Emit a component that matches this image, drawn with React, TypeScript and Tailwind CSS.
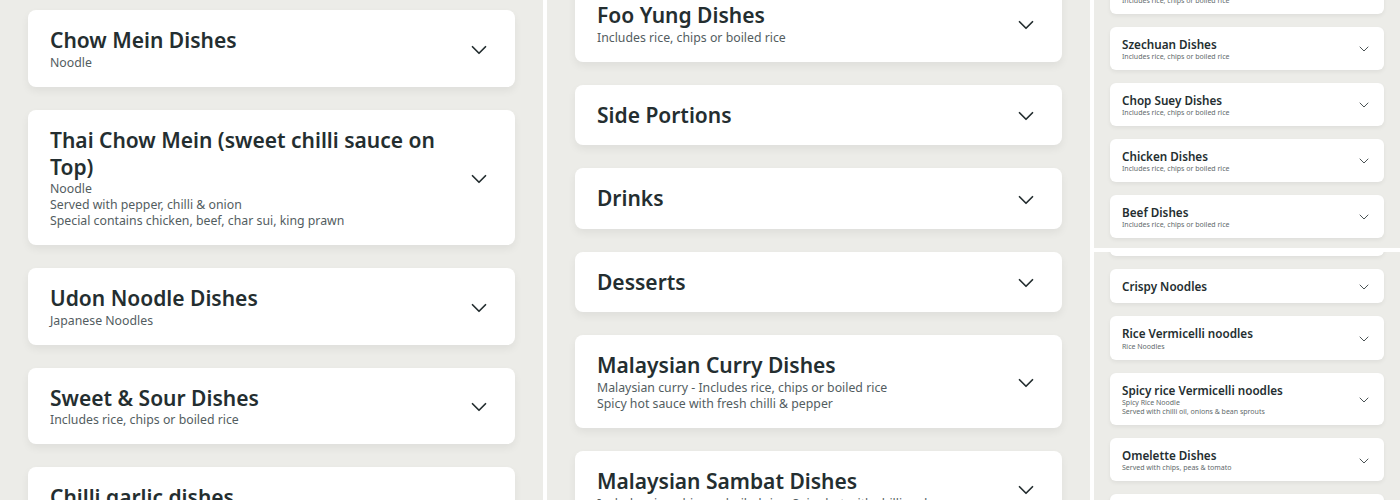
import { ChevronDown } from 'lucide-react'

interface Category {
  title: string
  lines?: string[]
}

const RICE = 'Includes rice, chips or boiled rice'

const leftCol: Category[] = [
  { title: 'Chow Mein Dishes', lines: ['Noodle'] },
  {
    title: 'Thai Chow Mein (sweet chilli sauce on Top)',
    lines: ['Noodle', 'Served with pepper, chilli & onion', 'Special contains chicken, beef, char sui, king prawn'],
  },
  { title: 'Udon Noodle Dishes', lines: ['Japanese Noodles'] },
  { title: 'Sweet & Sour Dishes', lines: [RICE] },
  { title: 'Chilli garlic dishes', lines: [RICE] },
]

const midCol: Category[] = [
  { title: 'Foo Yung Dishes', lines: [RICE] },
  { title: 'Side Portions' },
  { title: 'Drinks' },
  { title: 'Desserts' },
  {
    title: 'Malaysian Curry Dishes',
    lines: ['Malaysian curry - Includes rice, chips or boiled rice', 'Spicy hot sauce with fresh chilli & pepper'],
  },
  { title: 'Malaysian Sambat Dishes', lines: ['Includes rice, chips or boiled rice. Spicy hot with chilli and pepper'] },
]

const rightTop: Category[] = [
  { title: 'Curry Dishes', lines: [RICE] },
  { title: 'Szechuan Dishes', lines: [RICE] },
  { title: 'Chop Suey Dishes', lines: [RICE] },
  { title: 'Chicken Dishes', lines: [RICE] },
  { title: 'Beef Dishes', lines: [RICE] },
]

const rightBottom: Category[] = [
  { title: 'Fried Rice', lines: [RICE] },
  { title: 'Crispy Noodles' },
  { title: 'Rice Vermicelli noodles', lines: ['Rice Noodles'] },
  { title: 'Spicy rice Vermicelli noodles', lines: ['Spicy Rice Noodle', 'Served with chilli oil, onions & bean sprouts'] },
  { title: 'Omelette Dishes', lines: ['Served with chips, peas & tomato'] },
  { title: 'Prawn Dishes', lines: [RICE] },
]

function LargeCard({ title, lines }: Category) {
  return (
    <div className="flex items-center justify-between bg-white rounded-lg shadow-[0_4px_8px_rgba(0,0,0,0.06)] pl-[22px] pr-[23px] pt-[17px] pb-[16.5px]">
      <div className="w-[390px]">
        <h3 className="text-[21px] leading-[27px] font-semibold text-[#242e30]">{title}</h3>
        {lines && (
          <div className="mt-[0.75px] -mb-[0.75px]">
            {lines.map(l => (
              <p key={l} className="text-[12.3px] leading-[16px] text-[#535d5f]">{l}</p>
            ))}
          </div>
        )}
      </div>
      <ChevronDown size={26} strokeWidth={1.6} className="text-[#242e30] shrink-0 mt-[1px] -mb-[1px]" />
    </div>
  )
}

function SmallCard({ title, lines }: Category) {
  return (
    <div className="flex items-center justify-between bg-white rounded-md shadow-[0_2px_4px_rgba(0,0,0,0.06)] pl-[12px] pr-[12px] py-[8px]">
      <div>
        <h3 className="text-[11.7px] leading-[18px] font-semibold text-[#242e30]">{title}</h3>
        {lines && (
          <div className="-mt-[0.75px] mb-[0.75px]">
            {lines.map(l => (
              <p key={l} className="text-[7px] leading-[9.25px] text-[#5f6a6c]">{l}</p>
            ))}
          </div>
        )}
      </div>
      <ChevronDown size={16} strokeWidth={1.4} className="text-[#3d4648] shrink-0 mt-[1px] -mb-[1px]" />
    </div>
  )
}

export default function App() {
  return (
    <div className="flex h-[500px] w-[1400px] overflow-hidden bg-white font-['Noto_Sans',sans-serif]">
      <div className="w-[543px] h-full overflow-hidden bg-[#ecece8] px-[28px] pt-[10px]">
        <div className="flex flex-col gap-[23px]">
          {leftCol.map(c => <LargeCard key={c.title} {...c} />)}
        </div>
      </div>
      <div className="w-[543px] ml-[4px] h-full overflow-hidden bg-[#ecece8] px-[28px]">
        <div className="flex flex-col gap-[23px] -mt-[14.75px]">
          {midCol.map(c => <LargeCard key={c.title} {...c} />)}
        </div>
      </div>
      <div className="w-[306px] ml-[4px] h-full flex flex-col gap-[4px]">
        <div className="h-[248px] overflow-hidden bg-[#ecece8] px-[16px] flex flex-col justify-end pb-[10px]">
          <div className="flex flex-col gap-[12.75px]">
            {rightTop.map(c => <SmallCard key={c.title} {...c} />)}
          </div>
        </div>
        <div className="h-[248px] overflow-hidden bg-[#ecece8] px-[16px]">
          <div className="flex flex-col gap-[13px] -mt-[39px]">
            {rightBottom.map(c => <SmallCard key={c.title} {...c} />)}
          </div>
        </div>
      </div>
    </div>
  )
}
